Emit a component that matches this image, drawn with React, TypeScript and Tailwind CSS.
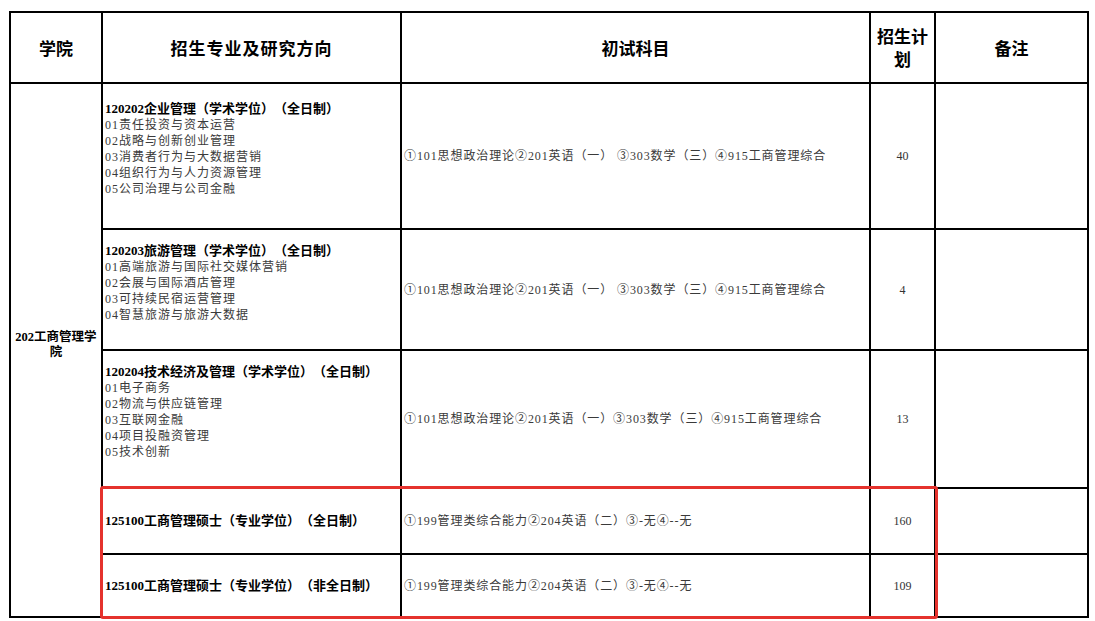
import React from "react";

interface Major {
  title: string;
  directions: string[];
  subjects: string;
  plan: string;
  short?: boolean;
}

const majors: Major[] = [
  {
    title: "120202企业管理（学术学位）（全日制）",
    directions: [
      "01责任投资与资本运营",
      "02战略与创新创业管理",
      "03消费者行为与大数据营销",
      "04组织行为与人力资源管理",
      "05公司治理与公司金融",
    ],
    subjects: "①101思想政治理论②201英语（一） ③303数学（三）④915工商管理综合",
    plan: "40",
  },
  {
    title: "120203旅游管理（学术学位）（全日制）",
    directions: [
      "01高端旅游与国际社交媒体营销",
      "02会展与国际酒店管理",
      "03可持续民宿运营管理",
      "04智慧旅游与旅游大数据",
    ],
    subjects: "①101思想政治理论②201英语（一） ③303数学（三）④915工商管理综合",
    plan: "4",
  },
  {
    title: "120204技术经济及管理（学术学位）（全日制）",
    directions: ["01电子商务", "02物流与供应链管理", "03互联网金融", "04项目投融资管理", "05技术创新"],
    subjects: "①101思想政治理论②201英语（一）③303数学（三）④915工商管理综合",
    plan: "13",
  },
  {
    title: "125100工商管理硕士（专业学位）（全日制）",
    directions: [],
    subjects: "①199管理类综合能力②204英语（二）③-无④--无",
    plan: "160",
    short: true,
  },
  {
    title: "125100工商管理硕士（专业学位）（非全日制）",
    directions: [],
    subjects: "①199管理类综合能力②204英语（二）③-无④--无",
    plan: "109",
    short: true,
  },
];

const rowHeights = ["h-[146px]", "h-[121px]", "h-[138px]", "h-[66px]", "h-[63px]"];

const serif = "font-['Liberation_Serif','Noto_Sans_CJK_SC',serif]";
const head = "font-['Noto_Sans_CJK_SC',sans-serif] font-bold text-[17px] leading-[23px] text-black";

export default function App() {
  return (
    <div className="w-[1095px] h-[621px] bg-white pt-[11px] pl-[9px] [text-spacing-trim:space-all]">
      <div className="relative w-[1078px]">
        <table className="table-fixed border-collapse w-[1078px]">
          <colgroup>
            <col className="w-[92px]" />
            <col className="w-[299px]" />
            <col className="w-[469px]" />
            <col className="w-[65px]" />
            <col className="w-[153px]" />
          </colgroup>
          <thead>
            <tr className="h-[71px]">
              <th className={`border-2 border-black ${head}`}>学院</th>
              <th className={`border-2 border-black ${head} tracking-[1px]`}>招生专业及研究方向</th>
              <th className={`border-2 border-black ${head}`}>初试科目</th>
              <th className={`border-2 border-black ${head} px-0 pb-[2px]`}>招生计划</th>
              <th className={`border-2 border-black ${head}`}>备注</th>
            </tr>
          </thead>
          <tbody>
            {majors.map((m, i) => (
              <tr key={i} className={rowHeights[i]}>
                {i === 0 && (
                  <td
                    rowSpan={5}
                    className={`border-2 border-black text-center align-middle px-0 pb-[10px] ${serif} font-bold text-[12.5px] leading-[15px] text-black`}
                  >
                    202工商管理学院
                  </td>
                )}
                <td className={`border-2 border-black align-middle pl-[2px] ${m.short ? "" : "pb-[14px]"} ${serif}`}>
                  <div className="font-bold text-[13px] leading-[16px] text-black whitespace-nowrap">{m.title}</div>
                  {m.directions.map((d) => (
                    <div key={d} className="text-[12px] leading-[16px] tracking-[1px] text-[#3a3a3a] whitespace-nowrap">
                      {d}
                    </div>
                  ))}
                </td>
                <td className={`border-2 border-black align-middle pl-[2px] ${serif} text-[12px] leading-[16px] tracking-[0.9px] text-[#3a3a3a] whitespace-nowrap`}>
                  {m.subjects}
                </td>
                <td className={`border-2 border-black align-middle text-center ${serif} text-[12px] text-[#333]`}>
                  {m.plan}
                </td>
                <td className="border-2 border-black"></td>
              </tr>
            ))}
          </tbody>
        </table>
        <div className="absolute left-[91px] top-[475px] w-[838px] h-[133px] border-[3px] border-[#e5322d] rounded-[3px] pointer-events-none"></div>
      </div>
    </div>
  );
}
